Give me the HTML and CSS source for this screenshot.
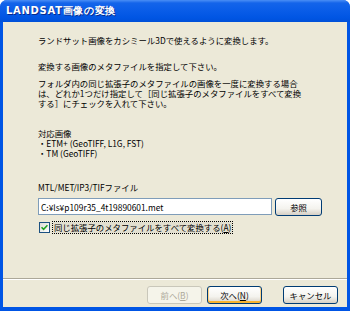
FILE: index.html
```html
<!DOCTYPE html>
<html lang="ja">
<head>
<meta charset="UTF-8">
<title>LANDSAT画像の変換</title>
<link rel="stylesheet" href="styles.css">
</head>
<body>

<div class="window">
    <div class="titlebar">LANDSAT画像の変換</div>
    <div class="client">
        <div class="main">
            <p class="intro">ランドサット画像をカシミール3Dで使えるように変換します。</p>
            <p class="step">変換する画像のメタファイルを指定して下さい。</p>
            <p class="note">フォルダ内の同じ拡張子のメタファイルの画像を一度に変換する場合<br>は、どれか1つだけ指定して［同じ拡張子のメタファイルをすべて変換<br>する］にチェックを入れて下さい。</p>
            <p class="formats">対応画像<br>・ETM+ (GeoTIFF, L1G, FST)<br>・TM (GeoTIFF)</p>
            <label class="field-label" for="metaFile">MTL/MET/IP3/TIFファイル</label>
            <div class="file-row">
                <input type="text" id="metaFile" class="file-input" value="C:¥ls¥p109r35_4t19890601.met">
                <button class="btn browse">参照</button>
            </div>
            <div class="check-row">
                <span class="checkbox">
                    <svg width="7" height="7" viewBox="0 0 7 7"><path d="M0.5 3.2 L2.6 5.4 L6.5 1.2" fill="none" stroke="#21a121" stroke-width="1.6"/></svg>
                </span>
                <span class="check-label">同じ拡張子のメタファイルをすべて変換する(<u>A</u>)</span>
            </div>
        </div>
        <div class="footer">
            <button class="btn" disabled>前へ(<u>B</u>)</button>
            <button class="btn default">次へ(<u>N</u>)</button>
            <button class="btn cancel">キャンセル</button>
        </div>
    </div>
</div>

</body>
</html>
```

FILE: styles.css
```css
body {
    margin: 0;
    padding: 0;
    font-family: "Noto Sans CJK JP", "DejaVu Sans", sans-serif;
    font-size: 8.4px;
    color: #000;
}

.window {
    width: 350px;
    height: 311px;
    display: flex;
    flex-direction: column;
    background: #0055e5;
    border-radius: 7px 7px 0 0;
    overflow: hidden;
}

.titlebar {
    height: 22px;
    line-height: 22px;
    padding-left: 6px;
    color: #fff;
    font-family: "DejaVu Sans", sans-serif;
    font-weight: bold;
    font-size: 10px;
    letter-spacing: 0.7px;
    background: linear-gradient(#4a8ef5 0, #1464ea 3px, #0a5de8 10px, #0055e3 18px, #0050d8 22px);
    text-shadow: 1px 1px 0 #0a2a8a;
}

.client {
    flex: 1;
    margin: 0 3px 4px 3px;
    background: #ece9d8;
    display: flex;
    flex-direction: column;
}

.main {
    flex: 1;
    padding: 13px 0 0 35px;
    line-height: 10px;
}

.main p {
    margin: 0;
}

.step {
    margin-top: 16px !important;
}

.note {
    margin-top: 7px !important;
}

.formats {
    margin-top: 20px !important;
}

.field-label {
    display: block;
    margin-top: 24px;
}

.file-row {
    display: flex;
    align-items: flex-start;
    gap: 3px;
    margin-top: 6px;
}

.file-input {
    width: 234px;
    height: 17px;
    box-sizing: border-box;
    border: 1px solid #7f9db9;
    padding: 0 2px;
    font-family: inherit;
    font-size: 8.4px;
    color: #000;
    background: #fff;
    outline: none;
}

.check-row {
    display: flex;
    align-items: center;
    gap: 3px;
    margin-top: 6px;
    padding-left: 1px;
}

.checkbox {
    width: 11px;
    height: 11px;
    box-sizing: border-box;
    border: 1px solid #1c5180;
    background: linear-gradient(135deg, #dcdcd7, #fff);
    display: flex;
    align-items: center;
    justify-content: center;
}

.check-label {
    outline: 1px dotted #000;
    background: #e2dfd0;
    line-height: 11px;
    padding: 0 1px;
}

.btn {
    height: 18px;
    box-sizing: border-box;
    border: 1px solid #003c74;
    border-radius: 3px;
    background: linear-gradient(#fff, #f4f3ee 60%, #d6d0c5);
    font-family: inherit;
    font-size: 8.4px;
    color: #000;
    padding: 0;
}

.browse {
    width: 47px;
}

.footer {
    height: 29px;
    box-sizing: border-box;
    border-top: 1px solid #aca899;
    box-shadow: inset 0 1px 0 #fff;
    display: flex;
    align-items: flex-start;
    padding: 7px 9px 0 0;
    justify-content: flex-end;
    gap: 5px;
}

.footer .btn {
    width: 55px;
}

.btn:disabled {
    border-color: #c9c7ba;
    color: #aca899;
    background: #f5f4ea;
}

.btn.default {
    box-shadow: inset 0 -2px 0 #f8b330, inset 1px 0 0 #fcd38a, inset -1px 0 0 #fcd38a;
}

.btn.cancel {
    margin-left: 16px;
}
```
